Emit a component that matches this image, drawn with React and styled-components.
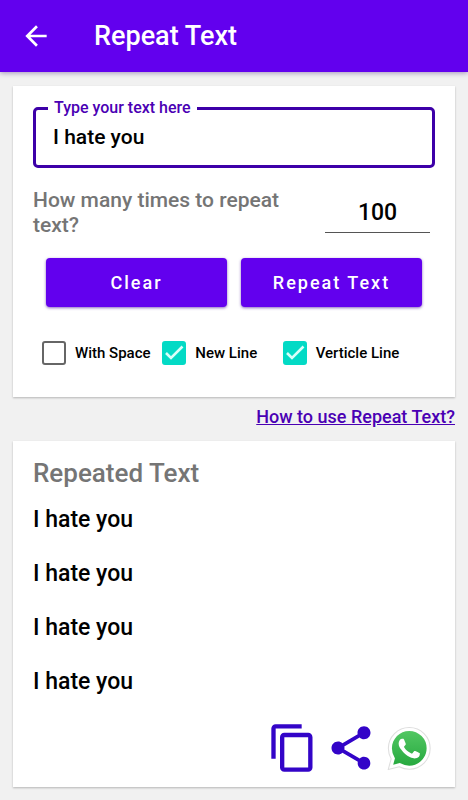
import React, { useState } from 'react';
import styled, { createGlobalStyle } from 'styled-components';
import { MdArrowBack, MdContentCopy, MdShare } from 'react-icons/md';

const PREVIEW_LINES = 4;

function WhatsAppLogo() {
	return (
		<svg width="52" height="52" viewBox="-2.9 -3.1 29.6 29.6" aria-hidden="true">
			<defs>
				<linearGradient id="bubble" x1="0" y1="0" x2="0" y2="1">
					<stop offset="0" stopColor="#52c763" />
					<stop offset="1" stopColor="#27a93f" />
				</linearGradient>
			</defs>
			<path
				fill="#fff"
				stroke="#dedede"
				strokeWidth="0.6"
				strokeLinejoin="round"
				d="M20.464 3.488A11.815 11.815 0 0012.05 0C5.495 0 .16 5.335.157 11.892c0 2.096.547 4.142 1.588 5.945L.057 24l6.305-1.654a11.882 11.882 0 005.683 1.448h.005c6.554 0 11.89-5.335 11.893-11.893a11.821 11.821 0 00-3.48-8.413z"
			/>
			<path
				fill="url(#bubble)"
				d="M12.051 21.785h-.004a9.87 9.87 0 01-5.031-1.378l-.361-.214-3.741.982.998-3.648-.235-.374a9.86 9.86 0 01-1.51-5.26c.001-5.45 4.436-9.884 9.888-9.884 2.64 0 5.122 1.03 6.988 2.898a9.825 9.825 0 012.893 6.994c-.003 5.45-4.437 9.884-9.885 9.884"
			/>
			<path
				fill="#fff"
				d="M17.472 14.382c-.297-.149-1.758-.867-2.03-.967-.273-.099-.471-.148-.67.15-.197.297-.767.966-.94 1.164-.173.199-.347.223-.644.075-.297-.15-1.255-.463-2.39-1.475-.883-.788-1.48-1.761-1.653-2.059-.173-.297-.018-.458.13-.606.134-.133.298-.347.446-.52.149-.174.198-.298.298-.497.099-.198.05-.371-.025-.52-.075-.149-.669-1.612-.916-2.207-.242-.579-.487-.5-.669-.51-.173-.008-.371-.01-.57-.01-.198 0-.52.074-.792.372-.272.297-1.04 1.016-1.04 2.479 0 1.462 1.065 2.875 1.213 3.074.149.198 2.096 3.2 5.077 4.487.709.306 1.262.489 1.694.625.712.227 1.36.195 1.871.118.571-.085 1.758-.719 2.006-1.413.248-.694.248-1.289.173-1.413-.074-.124-.272-.198-.57-.347"
			/>
		</svg>
	);
}

function Option({ label, checked, onChange }) {
	return (
		<OptionLabel>
			<Checkbox type="checkbox" checked={checked} onChange={(e) => onChange(e.target.checked)} />
			<CheckMark viewBox="0 0 24 24" aria-hidden="true">
				<path d="M4 12l5 5L20.5 5.5" fill="none" stroke="#d9fff9" strokeWidth="2.6" />
			</CheckMark>
			{label}
		</OptionLabel>
	);
}

function App() {

	const [text, setText] = useState('I hate you');
	const [count, setCount] = useState('100');
	const [repeated, setRepeated] = useState(Array(PREVIEW_LINES).fill('I hate you'));
	const [withSpace, setWithSpace] = useState(false);
	const [newLine, setNewLine] = useState(true);
	const [verticalLine, setVerticalLine] = useState(true);

	const repeatText = () => {
		const lines = Math.min(Number(count) || 0, PREVIEW_LINES);
		setRepeated(Array(lines).fill(text));
	};

	const clear = () => {
		setText('');
		setRepeated([]);
	};

	return (
		<>
			<GlobalStyle />
			<Toolbar>
				<IconButton type="button" aria-label="Back">
					<MdArrowBack size={32} />
				</IconButton>
				<Title>Repeat Text</Title>
			</Toolbar>
			<Content>
				<Card>
					<OutlinedField>
						<legend><label htmlFor="text">Type your text here</label></legend>
						<TextInput id="text" type="text" value={text} onChange={(e) => setText(e.target.value)} />
					</OutlinedField>
					<CountRow>
						<CountLabel htmlFor="count">How many times to repeat text?</CountLabel>
						<CountInput id="count" type="text" inputMode="numeric" value={count} onChange={(e) => setCount(e.target.value)} />
					</CountRow>
					<ButtonRow>
						<Button type="button" onClick={clear}>Clear</Button>
						<Button type="button" onClick={repeatText}>Repeat Text</Button>
					</ButtonRow>
					<OptionRow>
						<Option label="With Space" checked={withSpace} onChange={setWithSpace} />
						<Option label="New Line" checked={newLine} onChange={setNewLine} />
						<Option label="Verticle Line" checked={verticalLine} onChange={setVerticalLine} />
					</OptionRow>
				</Card>
				<HelpLink href="#help">How to use Repeat Text?</HelpLink>
				<Card $compact>
					<ResultTitle>Repeated Text</ResultTitle>
					<ResultList>
						{repeated.map((line, i) => <li key={i}>{line}</li>)}
					</ResultList>
					<ActionRow>
						<IconButton type="button" aria-label="Copy"><MdContentCopy size={52} /></IconButton>
						<IconButton type="button" aria-label="Share"><MdShare size={52} /></IconButton>
						<IconButton type="button" aria-label="Send with WhatsApp"><WhatsAppLogo /></IconButton>
					</ActionRow>
				</Card>
			</Content>
		</>
	);
}

export default App;


const GlobalStyle = createGlobalStyle`
	* {
		box-sizing: border-box;
	}
	body {
		margin: 0;
		background-color: #f1f1f1;
		color: #000;
		font-family: Roboto, sans-serif;
		font-weight: 500;
	}
	button, input {
		font: inherit;
		color: inherit;
	}
`;
const Toolbar = styled.header`
	display: flex;
	align-items: center;
	gap: 42px;
	padding: 20px;
	background-color: #6200ee;
	color: #fff;
	box-shadow: 0 1px 5px rgba(40, 0, 100, 0.4);
`;
const Title = styled.h1`
	margin: 0;
	font-size: 27px;
	line-height: 32px;
	font-weight: 500;
`;
const IconButton = styled.button`
	display: flex;
	padding: 0;
	border: none;
	background: none;
	cursor: pointer;
`;
const Content = styled.main`
	display: flex;
	flex-direction: column;
	padding: 14px 13px 13px;
`;
const Card = styled.section`
	padding: 20px;
	padding-bottom: ${({ $compact }) => ($compact ? '13px' : '20px')};
	background-color: #fff;
	box-shadow: 0 1px 2px rgba(0, 0, 0, 0.25);
`;
const OutlinedField = styled.fieldset`
	margin: 0;
	padding: 0 17px 14px;
	border: 3px solid #3d00a8;
	border-radius: 5px;
	legend {
		margin-left: -5px;
		padding: 0 6px;
		color: #4a00b4;
		font-size: 16px;
		line-height: 4px;
	}
`;
const TextInput = styled.input`
	display: block;
	width: 100%;
	height: 41px;
	padding: 13px 0 0;
	border: none;
	outline: none;
	background: none;
	font-size: 21px;
	line-height: 28px;
`;
const CountRow = styled.div`
	display: flex;
	align-items: center;
	justify-content: space-between;
	gap: 20px;
	margin-top: 20px;
	padding-right: 5px;
`;
const CountLabel = styled.label`
	flex: 1;
	color: #757575;
	font-size: 21px;
	line-height: 25px;
`;
const CountInput = styled.input`
	width: 105px;
	height: 40px;
	padding: 0;
	border: none;
	border-bottom: 1px solid #555;
	outline: none;
	background: none;
	font-size: 23px;
	text-align: center;
`;
const ButtonRow = styled.div`
	display: flex;
	gap: 14px;
	margin-top: 20px;
	padding: 0 13px;
`;
const Button = styled.button`
	flex: 1;
	padding: 12px 0;
	border: none;
	border-radius: 4px;
	background-color: #6200ee;
	color: #fff;
	box-shadow: 0 1px 3px rgba(60, 0, 150, 0.6);
	font-size: 18px;
	line-height: 25px;
	letter-spacing: 2px;
	cursor: pointer;
`;
const OptionRow = styled.div`
	display: grid;
	grid-template-columns: repeat(3, 1fr);
	margin: 34px 32px 12px 9px;
`;
const OptionLabel = styled.label`
	display: grid;
	grid-template-columns: 24px max-content;
	align-items: center;
	column-gap: 9px;
	font-size: 15px;
	line-height: 24px;
`;
const Checkbox = styled.input`
	grid-area: 1 / 1;
	appearance: none;
	width: 24px;
	height: 24px;
	margin: 0;
	border: 2px solid #666;
	border-radius: 3px;
	&:checked {
		border-color: #03dac5;
		background-color: #03dac5;
	}
`;
const CheckMark = styled.svg`
	grid-area: 1 / 1;
	width: 24px;
	height: 24px;
	pointer-events: none;
	visibility: hidden;
	${Checkbox}:checked + & {
		visibility: visible;
	}
`;
const HelpLink = styled.a`
	align-self: flex-end;
	margin: 8px 0 12px;
	color: #4a00b4;
	font-size: 18px;
	line-height: 24px;
`;
const ResultTitle = styled.h2`
	margin: 0;
	color: #757575;
	font-size: 26px;
	line-height: 24px;
	font-weight: 500;
`;
const ResultList = styled.ul`
	display: flex;
	flex-direction: column;
	gap: 28px;
	margin: 0;
	padding: 22px 0 0;
	list-style: none;
	font-size: 23px;
	line-height: 26px;
`;
const ActionRow = styled.div`
	display: flex;
	justify-content: flex-end;
	gap: 6px;
	margin-top: 27px;
	color: #3304c8;
`;
